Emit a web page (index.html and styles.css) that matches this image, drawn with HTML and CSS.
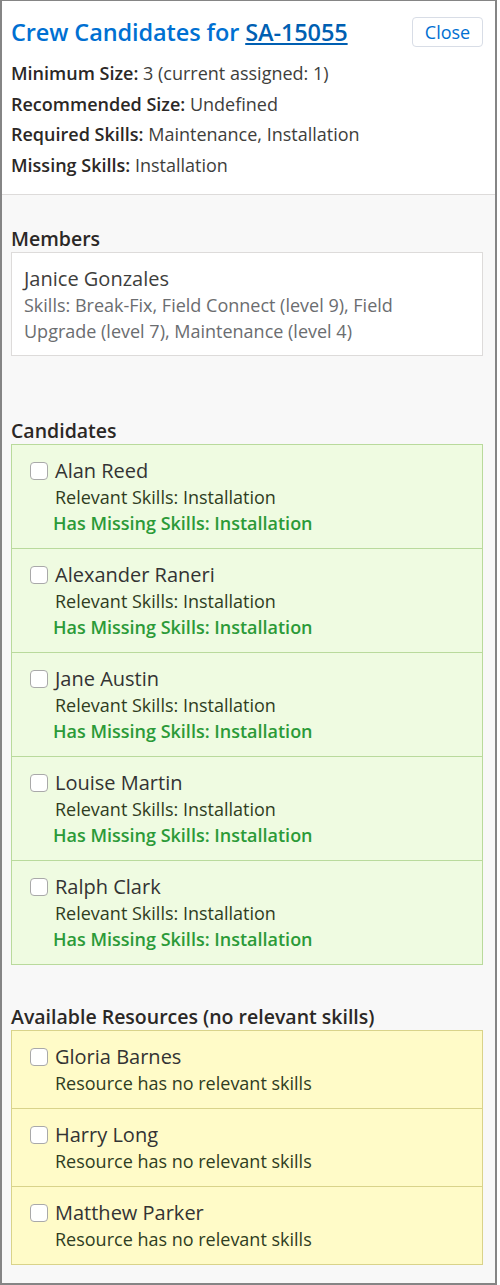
FILE: index.html
```html
<!DOCTYPE html>
<html lang="en">
  <head>
    <meta charset="UTF-8" />
    <meta name="viewport" content="width=device-width, initial-scale=1.0" />
    <title>Crew Candidates</title>
    <link rel="stylesheet" href="styles.css">
  </head>
  <body>
    <div class="panel">
      <div class="head">
        <div class="title-row">
          <h1 class="title">Crew Candidates for <a href="#">SA-15055</a></h1>
          <button class="close-btn" type="button">Close</button>
        </div>
        <div class="info">
          <div><b>Minimum Size:</b> 3 (current assigned: 1)</div>
          <div><b>Recommended Size:</b> Undefined</div>
          <div><b>Required Skills:</b> Maintenance, Installation</div>
          <div><b>Missing Skills:</b> Installation</div>
        </div>
      </div>

      <div class="content">
        <h2 class="section-title first">Members</h2>
        <div class="member-box">
          <div class="member-name">Janice Gonzales</div>
          <div class="member-skills">Skills: Break-Fix, Field Connect (level 9), Field Upgrade (level 7), Maintenance (level 4)</div>
        </div>

        <h2 class="section-title">Candidates</h2>
        <div class="list green">
          <label class="item">
            <input type="checkbox">
            <div class="item-text">
              <div class="item-name">Alan Reed</div>
              <div class="item-line">Relevant Skills: Installation</div>
              <div class="item-missing">Has Missing Skills: Installation</div>
            </div>
          </label>
          <label class="item">
            <input type="checkbox">
            <div class="item-text">
              <div class="item-name">Alexander Raneri</div>
              <div class="item-line">Relevant Skills: Installation</div>
              <div class="item-missing">Has Missing Skills: Installation</div>
            </div>
          </label>
          <label class="item">
            <input type="checkbox">
            <div class="item-text">
              <div class="item-name">Jane Austin</div>
              <div class="item-line">Relevant Skills: Installation</div>
              <div class="item-missing">Has Missing Skills: Installation</div>
            </div>
          </label>
          <label class="item">
            <input type="checkbox">
            <div class="item-text">
              <div class="item-name">Louise Martin</div>
              <div class="item-line">Relevant Skills: Installation</div>
              <div class="item-missing">Has Missing Skills: Installation</div>
            </div>
          </label>
          <label class="item">
            <input type="checkbox">
            <div class="item-text">
              <div class="item-name">Ralph Clark</div>
              <div class="item-line">Relevant Skills: Installation</div>
              <div class="item-missing">Has Missing Skills: Installation</div>
            </div>
          </label>
        </div>

        <h2 class="section-title near">Available Resources (no relevant skills)</h2>
        <div class="list yellow">
          <label class="item">
            <input type="checkbox">
            <div class="item-text">
              <div class="item-name">Gloria Barnes</div>
              <div class="item-line">Resource has no relevant skills</div>
            </div>
          </label>
          <label class="item">
            <input type="checkbox">
            <div class="item-text">
              <div class="item-name">Harry Long</div>
              <div class="item-line">Resource has no relevant skills</div>
            </div>
          </label>
          <label class="item">
            <input type="checkbox">
            <div class="item-text">
              <div class="item-name">Matthew Parker</div>
              <div class="item-line">Resource has no relevant skills</div>
            </div>
          </label>
        </div>
      </div>
    </div>
  </body>
</html>
```

FILE: styles.css
```css
body {
  margin: 0;
  background-color: #ffffff;
  font-family: "Open Sans", "Noto Sans", sans-serif;
  color: #3e3e3c;
}

.panel {
  width: 497px;
  box-sizing: border-box;
  border: 2px solid #858585;
  border-top-width: 1px;
  background-color: #f8f8f8;
}

.head {
  background-color: #ffffff;
  padding: 16px 12px 14px 9px;
  border-bottom: 1px solid #dddbda;
}

.title-row {
  display: flex;
  justify-content: space-between;
  align-items: center;
  height: 30px;
}

.title {
  margin: 0;
  font-size: 23.5px;
  font-weight: 600;
  color: #0070d2;
  letter-spacing: -0.1px;
}

.title a {
  color: #005fb2;
  text-decoration: underline;
}

.close-btn {
  width: 71px;
  height: 30px;
  padding: 0;
  border: 1px solid #d8dde6;
  border-radius: 4px;
  background-color: #ffffff;
  color: #0070d2;
  font-family: "Open Sans", "Noto Sans", sans-serif;
  font-size: 18px;
  cursor: pointer;
}

.info {
  margin-top: 11px;
  font-size: 18px;
  line-height: 30.5px;
  color: #3e3e3c;
}

.info b {
  font-weight: 600;
  color: #2b2826;
}

.content {
  padding: 0 12px 18px 9px;
}

.section-title {
  margin: 64px 0 2px 0;
  font-size: 19.5px;
  line-height: 22px;
  font-weight: 600;
  color: #2b2826;
}

.section-title.first {
  margin-top: 33px;
}

.section-title.near {
  margin-top: 41px;
}

.member-box {
  background-color: #ffffff;
  border: 1px solid #dddbda;
  padding: 13px 14px 11px 12px;
}

.member-name {
  font-size: 20px;
  line-height: 26px;
  color: #3e3e3c;
}

.member-skills {
  font-size: 18px;
  line-height: 26px;
  color: #6b6d70;
}

.list {
  border: 1px solid;
}

.list.green {
  background-color: #effbe1;
  border-color: #b9da9c;
}

.list.yellow {
  background-color: #fffbc8;
  border-color: #d9d38a;
}

.item {
  display: flex;
  align-items: flex-start;
  padding: 13px 12px 12px 18px;
  border-top: 1px solid;
}

.green .item {
  border-color: #b9da9c;
}

.yellow .item {
  border-color: #d9d38a;
}

.item:first-child {
  border-top: none;
}

.item input {
  appearance: none;
  -webkit-appearance: none;
  flex: none;
  box-sizing: border-box;
  width: 18px;
  height: 18px;
  margin: 4px 7px 0 0;
  background-color: #ffffff;
  border: 1px solid #a9a9a9;
  border-radius: 4px;
}

.item-name {
  font-size: 20px;
  line-height: 26px;
  color: #333333;
}

.item-line {
  font-size: 18px;
  line-height: 26px;
  color: #2f3d22;
}

.item-missing {
  font-size: 18px;
  line-height: 26px;
  font-weight: 600;
  color: #2b9a38;
  margin-left: -2px;
}
```
